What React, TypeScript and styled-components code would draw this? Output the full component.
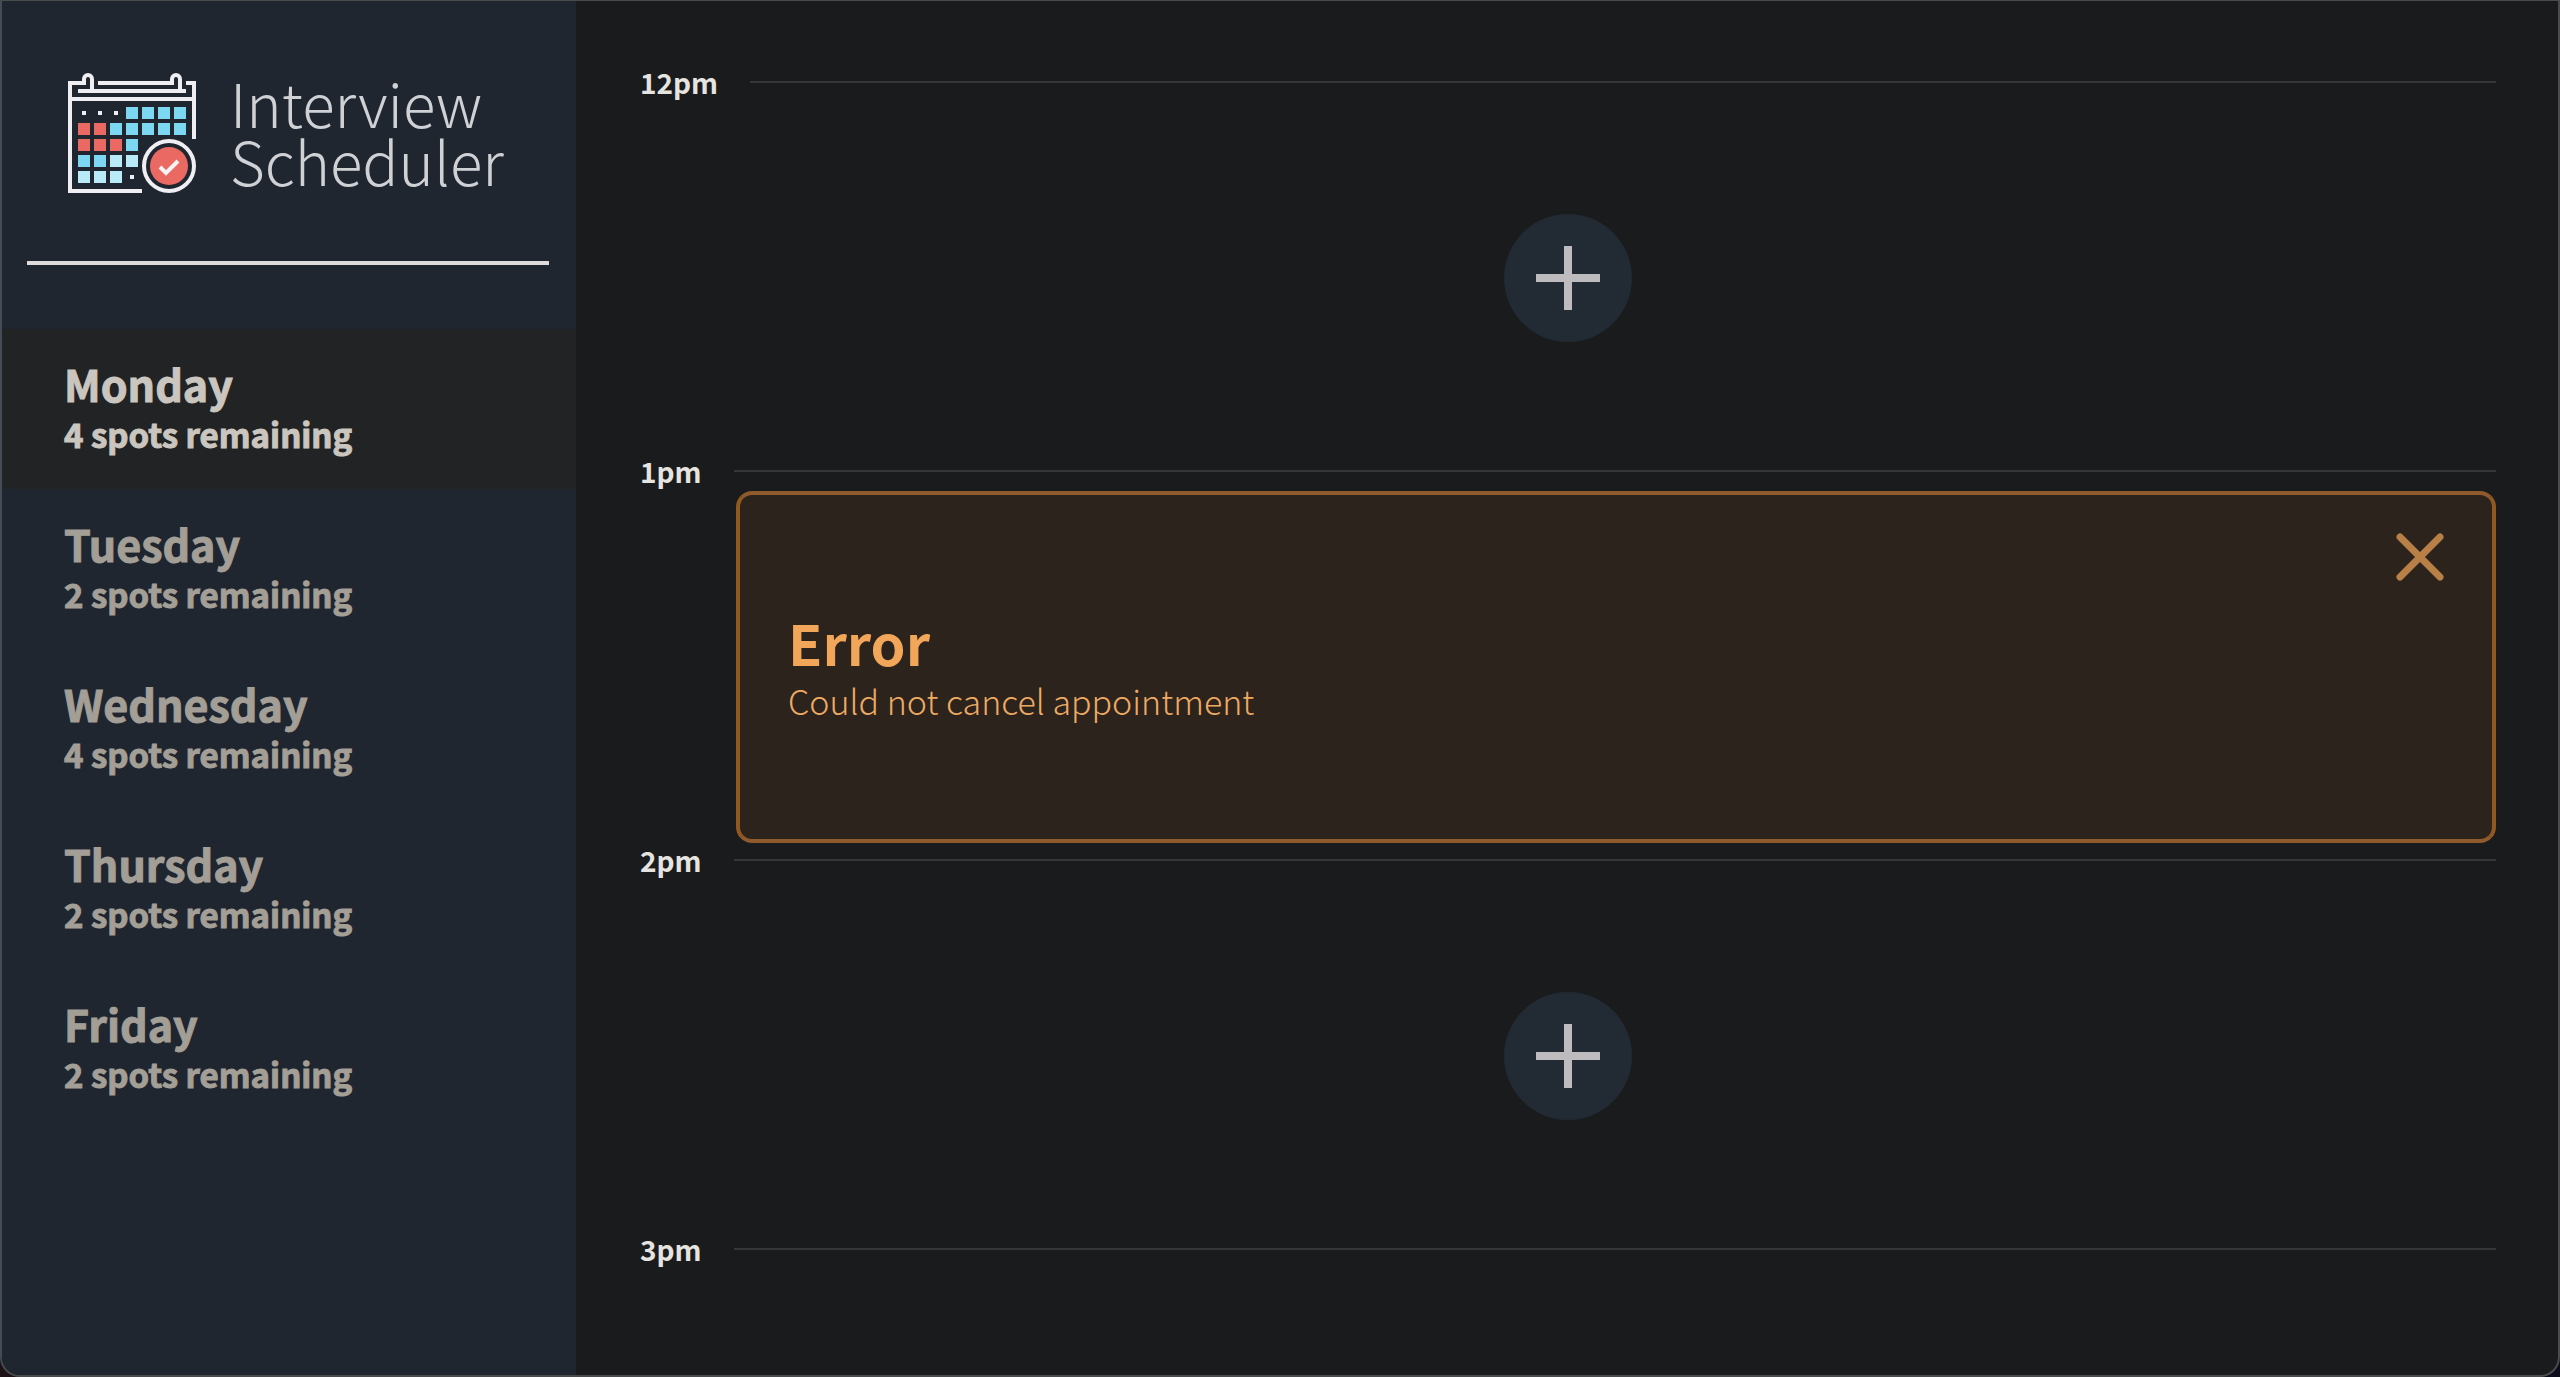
import React from "react";
import styled, { createGlobalStyle } from "styled-components";

const GlobalStyle = createGlobalStyle`
  *, *::before, *::after { box-sizing: border-box; }
  body {
    margin: 0;
    background: linear-gradient(90deg, #1d1216, #0c0d1c);
    font-family: "Source Sans Pro", "Noto Sans CJK JP", "Noto Sans", sans-serif;
  }
  h1, h2, h3, p, ul { margin: 0; padding: 0; }
`;

const Window = styled.div`
  display: flex;
  min-height: 100vh;
  border: 2px solid #4a4b4c;
  border-left-color: #464c55;
  border-top-width: 1px;
  border-radius: 0 0 20px 20px;
  background: #1a1b1c;
  overflow: hidden;
`;

const Sidebar = styled.aside`
  flex: 0 0 574px;
  background: #1f2630;
`;

const Brand = styled.header`
  display: flex;
  align-items: center;
  gap: 34px;
  height: 260px;
  padding: 0 0 0 66px;
`;

const BrandIcon = styled.svg`
  width: 128px;
  height: 124px;
  flex: none;
`;

const BrandName = styled.h1`
  color: #cfd1d5;
  font-size: 60px;
  font-weight: 300;
  line-height: 58px;
`;

const Divider = styled.hr`
  height: 4px;
  margin: 0 27px 64px 25px;
  border: 0;
  background: #dddbdb;
`;

const DayList = styled.ul`
  list-style: none;
`;

const DayButton = styled.button<{ $selected: boolean }>`
  display: block;
  width: 100%;
  height: 160px;
  padding: 0 62px;
  border: 0;
  text-align: left;
  font: inherit;
  font-weight: 700;
  -webkit-text-stroke: 1px currentColor;
  cursor: pointer;
  background: ${(p) => (p.$selected ? "#222324" : "transparent")};
  color: ${(p) => (p.$selected ? "#cac6bf" : "#a39e96")};
`;

const DayName = styled.span`
  display: block;
  font-size: 43px;
  line-height: 50px;
`;

const DaySpots = styled.span`
  display: block;
  font-size: 33px;
  line-height: 52px;
`;

const Schedule = styled.main`
  flex: 1;
  min-width: 0;
  padding: 64px 62px 0 64px;
`;

const Slot = styled.section`
  display: flex;
  flex-direction: column;
`;

const SlotHeader = styled.header`
  display: flex;
  align-items: center;
  gap: 32px;
  height: 37px;
  padding-bottom: 3px;
`;

const SlotTime = styled.h2`
  color: #e6e4e1;
  font-size: 28px;
  font-weight: 700;
  line-height: 34px;
`;

const SlotRule = styled.hr`
  flex: 1;
  height: 2px;
  margin: 0;
  border: 0;
  background: #353637;
`;

const EmptySlot = styled.div`
  display: flex;
  align-items: center;
  justify-content: center;
  height: 352px;
`;

const AddButton = styled.button`
  display: flex;
  align-items: center;
  justify-content: center;
  width: 128px;
  height: 128px;
  padding: 0;
  border: 0;
  border-radius: 50%;
  background: #222a33;
  cursor: pointer;
`;

const ErrorCard = styled.article`
  display: flex;
  align-items: flex-start;
  justify-content: space-between;
  height: 352px;
  margin-left: 96px;
  padding: 38px 48px 32px 48px;
  border: 4px solid #91581f;
  border-top-color: #8f5a2c;
  border-bottom-color: #8f5a2c;
  border-radius: 16px;
  background: #2c231d;
`;

const ErrorText = styled.div`
  align-self: center;
`;

const ErrorTitle = styled.h3`
  color: #f2a65a;
  font-size: 56px;
  font-weight: 700;
  line-height: 62px;
`;

const ErrorMessage = styled.p`
  color: #eeaa62;
  font-size: 34px;
  font-weight: 300;
  line-height: 56px;
`;

const CloseButton = styled.button`
  display: flex;
  padding: 0;
  border: 0;
  background: none;
  cursor: pointer;
`;

const days = [
  { name: "Monday", spots: 4 },
  { name: "Tuesday", spots: 2 },
  { name: "Wednesday", spots: 4 },
  { name: "Thursday", spots: 2 },
  { name: "Friday", spots: 2 },
];

const cells: [number, number, string][] = [
  ...[0, 1].flatMap((row) =>
    [3, 4, 5, 6].map((col): [number, number, string] => [col, row, "#7dd7f0"])
  ),
  [0, 1, "#ea6a63"], [1, 1, "#ea6a63"], [2, 1, "#7dd7f0"],
  [0, 2, "#ea6a63"], [1, 2, "#ea6a63"], [2, 2, "#ea6a63"], [3, 2, "#7dd7f0"],
  [0, 3, "#7dd7f0"], [1, 3, "#7dd7f0"], [2, 3, "#b8ebf7"], [3, 3, "#b8ebf7"],
  [0, 4, "#b8ebf7"], [1, 4, "#b8ebf7"], [2, 4, "#b8ebf7"],
];

const dots = [[0, 0], [1, 0], [2, 0], [3, 4]];

function CalendarLogo() {
  return (
    <BrandIcon viewBox="0 -4 128 124" aria-hidden="true">
      <g fill="none" stroke="#efeef2" strokeWidth="4">
        <path d="M74 118H2V10H16V6a4 4 0 0 1 8 0V18" />
        <path d="M30 10H104V6a4 4 0 0 1 8 0V18" />
        <path d="M118 10H126V66" />
        <path d="M10 18H118" />
        <path d="M2 26H126" />
      </g>
      {cells.map(([col, row, color]) => (
        <rect key={`${col}-${row}`} x={10 + col * 16} y={34 + row * 16} width="12" height="12" fill={color} />
      ))}
      {dots.map(([col, row]) => (
        <rect key={`${col}-${row}`} x={14 + col * 16} y={38 + row * 16} width="4" height="4" fill="#efeef2" />
      ))}
      <circle cx="101" cy="93" r="25" fill="#1f2630" stroke="#efeef2" strokeWidth="4" />
      <circle cx="101" cy="93" r="19" fill="#ea6a63" />
      <path d="M92 94l6 6 12-12" fill="none" stroke="#f6f3f4" strokeWidth="4" />
    </BrandIcon>
  );
}

function SlotHead({ time }: { time: string }) {
  return (
    <SlotHeader>
      <SlotTime>{time}</SlotTime>
      <SlotRule />
    </SlotHeader>
  );
}

function OpenSlot({ time }: { time: string }) {
  return (
    <Slot>
      <SlotHead time={time} />
      <EmptySlot>
        <AddButton type="button" aria-label={`Add appointment at ${time}`}>
          <svg width="64" height="64" viewBox="0 0 64 64" aria-hidden="true">
            <path d="M32 0V64M0 32H64" stroke="#bdbbbd" strokeWidth="8" />
          </svg>
        </AddButton>
      </EmptySlot>
    </Slot>
  );
}

export default function App() {
  const [selected, setSelected] = React.useState("Monday");
  return (
    <>
      <GlobalStyle />
      <Window>
        <Sidebar>
          <Brand>
            <CalendarLogo />
            <BrandName>
              Interview
              <br />
              Scheduler
            </BrandName>
          </Brand>
          <Divider />
          <nav>
            <DayList>
              {days.map((day) => (
                <li key={day.name}>
                  <DayButton
                    type="button"
                    $selected={day.name === selected}
                    onClick={() => setSelected(day.name)}
                  >
                    <DayName>{day.name}</DayName>
                    <DaySpots>{day.spots} spots remaining</DaySpots>
                  </DayButton>
                </li>
              ))}
            </DayList>
          </nav>
        </Sidebar>
        <Schedule>
          <OpenSlot time="12pm" />
          <Slot>
            <SlotHead time="1pm" />
            <ErrorCard>
              <ErrorText>
                <ErrorTitle>Error</ErrorTitle>
                <ErrorMessage>Could not cancel appointment</ErrorMessage>
              </ErrorText>
              <CloseButton type="button" aria-label="Close">
                <svg width="48" height="48" viewBox="0 0 48 48" aria-hidden="true">
                  <path d="M4 4L44 44M44 4L4 44" stroke="#b87f47" strokeWidth="7" strokeLinecap="round" />
                </svg>
              </CloseButton>
            </ErrorCard>
          </Slot>
          <OpenSlot time="2pm" />
          <Slot>
            <SlotHead time="3pm" />
          </Slot>
        </Schedule>
      </Window>
    </>
  );
}
